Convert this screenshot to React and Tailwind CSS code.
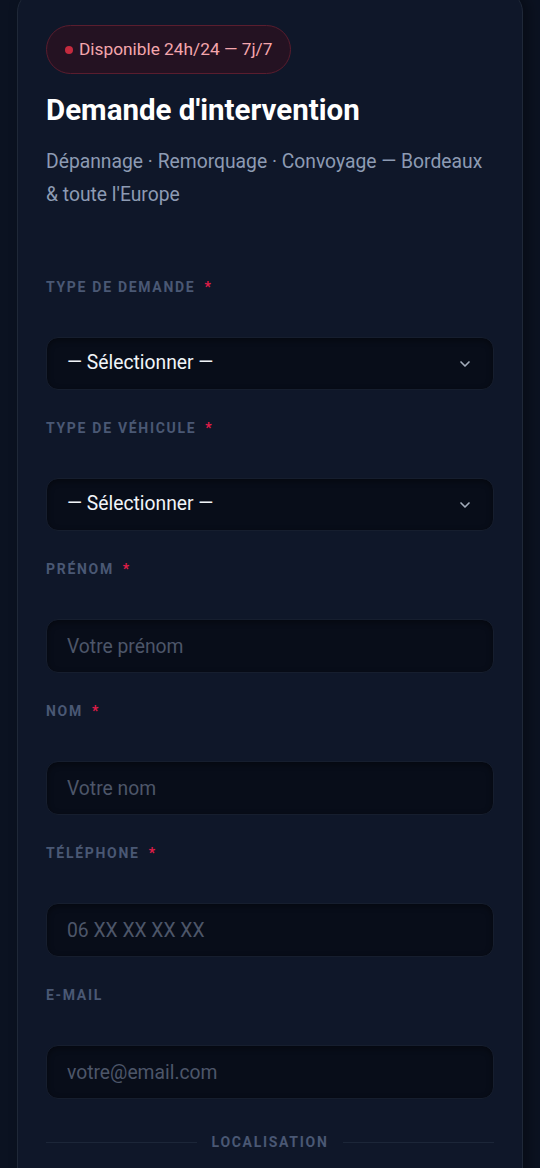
import { ChevronDown } from 'lucide-react'

function Label({ text, required }) {
    return (
        <label className='flex items-center h-[20px] text-[14px] font-bold uppercase tracking-[1.7px] text-[#4a5874]'>
            {text}
            {required && <span className='ml-[9px] text-[#e11d48]'>*</span>}
        </label>
    )
}

function SelectField({ label }) {
    return (
        <div className='flex flex-col'>
            <Label text={label} required />
            <div className='mt-[40px] h-[53px] w-full rounded-[12px] border border-[#161e2e] bg-[#080d19] flex items-center justify-between pl-[20px] pr-[20px] shadow-[inset_0_2px_6px_rgba(0,0,0,0.4)]'>
                <span className='text-[19.3px] text-[#f1f5f9]'>— Sélectionner —</span>
                <ChevronDown size={16} strokeWidth={2.5} className='text-[#a3acbb]' />
            </div>
        </div>
    )
}

function InputField({ label, placeholder, required }) {
    return (
        <div className='flex flex-col'>
            <Label text={label} required={required} />
            <input
                placeholder={placeholder}
                className='mt-[40px] h-[54px] w-full rounded-[12px] border border-[#161e2e] bg-[#080d19] px-[20px] text-[19.3px] text-white placeholder:text-[#4d5669] outline-none shadow-[inset_0_2px_6px_rgba(0,0,0,0.4)]'
            />
        </div>
    )
}

export default function App() {
    return (
        <div className='min-h-[1168px] w-full bg-[#0b1221] overflow-hidden' style={{ fontFamily: 'Roboto, "Noto Sans", sans-serif' }}>
            <section className='mx-[17px] mt-[-10px] rounded-[22px] border border-[#1f2838] bg-[#0f1729] px-[28px] pt-[34px] pb-[40px] shadow-[6px_0_14px_rgba(0,0,0,0.35)]'>
                <div className='inline-flex items-center h-[49px] rounded-full border border-[#5a1d2e] bg-[#241222] pl-[18px] pr-[18px]'>
                    <span className='w-[8px] h-[8px] rounded-full bg-[#c42a3e]' />
                    <span className='ml-[6px] text-[17.3px] text-[#f4a6ad]'>Disponible 24h/24 — 7j/7</span>
                </div>
                <h1 className='mt-[18px] text-[29.5px] leading-[36px] font-bold text-white'>Demande d'intervention</h1>
                <p className='mt-[17px] text-[19.3px] leading-[33px] text-[#8d9bb3]'>Dépannage · Remorquage · Convoyage — Bordeaux &amp; toute l'Europe</p>

                <div className='mt-[66px] flex flex-col gap-[28px]'>
                    <SelectField label='Type de demande' />
                    <SelectField label='Type de véhicule' />
                    <InputField label='Prénom' placeholder='Votre prénom' required />
                    <InputField label='Nom' placeholder='Votre nom' required />
                    <InputField label='Téléphone' placeholder='06 XX XX XX XX' required />
                    <InputField label='E-mail' placeholder='votre@email.com' />
                </div>

                <div className='mt-[33px] flex items-center gap-[15px]'>
                    <div className='flex-1 h-px bg-[#1c2638]' />
                    <span className='text-[14px] font-bold uppercase tracking-[1.7px] text-[#4a5874]'>Localisation</span>
                    <div className='flex-1 h-px bg-[#1c2638]' />
                </div>
            </section>
        </div>
    )
}
